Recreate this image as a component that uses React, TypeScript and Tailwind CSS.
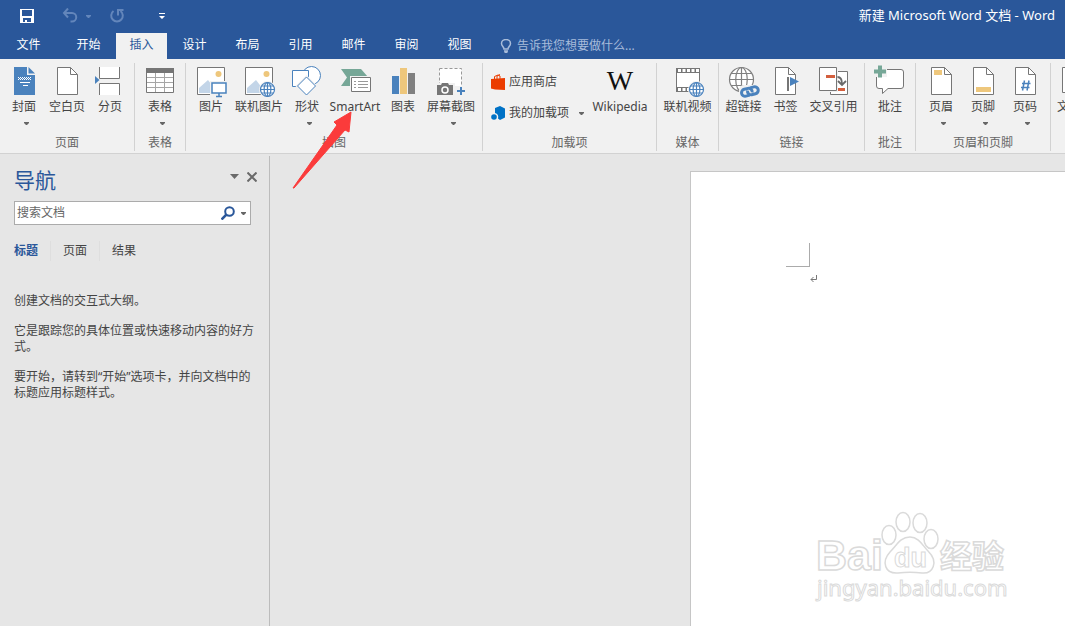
import type { ReactNode } from "react";

const TABS = ["开始", "插入", "设计", "布局", "引用", "邮件", "审阅", "视图"];
const GRAY = "#767676";
const BLUE = "#4a82bd";
const GOLD = "#eec77c";

function Icon({ children }: { children: ReactNode }) {
  return (
    <svg className="h-8 w-8 shrink-0 overflow-visible" viewBox="0 0 32 32" fill="none" aria-hidden="true">
      {children}
    </svg>
  );
}

function Caret({ className = "text-[#666]" }: { className?: string }) {
  return (
    <svg className={`h-[3px] w-[5px] shrink-0 ${className}`} viewBox="0 0 5 3" aria-hidden="true">
      <path d="M0 0h5v1L3 3H2L0 1z" fill="currentColor" />
    </svg>
  );
}

function PageShape({ children }: { children?: ReactNode }) {
  return (
    <Icon>
      <path d="M6.5 1.5h13l7 7v20h-20z" fill="#fff" stroke={GRAY} />
      <path d="M19.5 1.5v7h7" stroke={GRAY} />
      {children}
    </Icon>
  );
}

function Globe({ cx, cy, r, color }: { cx: number; cy: number; r: number; color: string }) {
  return (
    <g stroke={color} strokeWidth="1.2">
      <circle cx={cx} cy={cy} r={r} fill="#fff" />
      <ellipse cx={cx} cy={cy} rx={r * 0.48} ry={r} />
      <path d={`M${cx} ${cy - r}v${r * 2}M${cx - r} ${cy}h${r * 2}`} />
      <path d={`M${cx - r * 0.87} ${cy - r / 2}h${r * 1.74}M${cx - r * 0.87} ${cy + r / 2}h${r * 1.74}`} />
    </g>
  );
}

function Photo({ children }: { children: ReactNode }) {
  return (
    <Icon>
      <path d="M2.5 1.5h27v27h-27z" fill="#fff" stroke={GRAY} />
      <path d="M4 27v-5l9-8 10 13z" fill="#c3d5e8" />
      <circle cx="23.5" cy="8" r="3" fill={GOLD} />
      {children}
    </Icon>
  );
}

const icons = {
  cover: (
    <Icon>
      <path d="M6 1h13v8h8v20H6z" fill={BLUE} />
      <path d="M20.5 1l6.5 6.5h-6.5z" fill={BLUE} />
      <path d="M10 11.5h13M10 13.5h13" stroke="#fff" strokeDasharray="1 1" />
      <path d="M11 12.5h12" stroke="#fff" strokeDasharray="1 1" />
      <path d="M12 16.5h10M15 19.5h5" stroke="#fff" />
    </Icon>
  ),
  blank: <PageShape />,
  pageBreak: (
    <Icon>
      <path d="M5.5 1v11.5h20V1M5.5 29V17.5h20V29" fill="#fff" stroke={GRAY} />
      <path d="M1 10l4.5 4L1 18z" fill={BLUE} />
    </Icon>
  ),
  table: (
    <Icon>
      <path d="M2.5 2.5h27v24h-27z" fill="#fff" stroke={GRAY} />
      <path d="M2 2h28v5H2z" fill={GRAY} />
      <path d="M3 11.5h26M3 16.5h26M3 21.5h26M11.5 7v19M20.5 7v19" stroke="#a6a6a6" />
    </Icon>
  ),
  picture: (
    <Photo>
      <path d="M15 15h18v14H15z" fill="#f1f1f1" />
      <path d="M17 17h14v10H17z" fill="#fff" stroke={BLUE} strokeWidth="1.5" />
      <path d="M24 27v3M21 30.5h6" stroke={BLUE} strokeWidth="1.5" />
    </Photo>
  ),
  onlinePicture: (
    <Photo>
      <circle cx="24.5" cy="23.5" r="8.5" fill="#f1f1f1" />
      <Globe cx={24.5} cy={23.5} r={7} color={BLUE} />
    </Photo>
  ),
  shapes: (
    <Icon>
      <g fill="#fff" stroke={BLUE}>
        <circle cx="20.5" cy="9.5" r="9" />
        <path d="M1.5 4.5h16v16h-16z" />
        <path d="M15.5 11l9 9-9 9-9-9z" stroke="#f1f1f1" strokeWidth="3" />
        <path d="M15.5 11l9 9-9 9-9-9z" />
      </g>
    </Icon>
  ),
  smartArt: (
    <Icon>
      <path d="M2 3h20l7 8-6 9H2l6-8.5z" fill="#76a797" />
      <path d="M11 10h21v17H11z" fill="#f1f1f1" />
      <path d="M12.5 11.5h19v14h-19z" fill="#fff" stroke={GRAY} />
      <path d="M15 15.5h2M15 18.5h2M15 21.5h2M19 15.5h10M19 18.5h10M19 21.5h10" stroke="#999" />
    </Icon>
  ),
  chart: (
    <Icon>
      <path d="M5 10h7v18H5z" fill={BLUE} />
      <path d="M13 2h7v26h-7z" fill={GOLD} />
      <path d="M21 7h7v21h-7z" fill="#808080" />
    </Icon>
  ),
  screenshot: (
    <Icon>
      <path d="M4.5 2.5h22v24h-22z" fill="#fff" stroke="#999" strokeDasharray="3 2" />
      <path d="M1 17h19v13H1zM20 20h12v11H20z" fill="#f1f1f1" />
      <path d="M2 19h4l1-2h6l1 2h4v10H2z" fill={GRAY} />
      <circle cx="10" cy="24" r="3" stroke="#fff" strokeWidth="1.5" />
      <path d="M22 25h8M26 21v8" stroke={BLUE} strokeWidth="2" />
    </Icon>
  ),
  wikipedia: (
    <Icon>
      <text x="16" y="24" textAnchor="middle" fontSize="28" fill="#111" className="font-['Liberation_Serif',serif]">W</text>
    </Icon>
  ),
  video: (
    <Icon>
      <path d="M4.5 2.5h23v22h-23z" fill="#fff" stroke={GRAY} />
      <path d="M4 4.5h24M4 23.5h13" stroke={GRAY} strokeWidth="5" />
      <path d="M6 4.5h21M6 23.5h11" stroke="#fff" strokeWidth="3" strokeDasharray="3 1.500" />
      <circle cx="24.5" cy="23.5" r="8.5" fill="#f1f1f1" />
      <Globe cx={24.5} cy={23.5} r={7} color={BLUE} />
    </Icon>
  ),
  link: (
    <Icon>
      <Globe cx={13.5} cy={13.5} r={12} color="#808080" />
      <rect x="11" y="19" width="22" height="13" rx="5" fill="#f1f1f1" />
      <g stroke={BLUE} strokeWidth="3" transform="rotate(-14 22 26)">
        <path d="M21 29h-4a3.5 3.5 0 010-7h4a3.5 3.5 0 013 5" />
        <path d="M23 22h4a3.5 3.5 0 010 7h-4a3.5 3.5 0 01-3-5" />
      </g>
    </Icon>
  ),
  bookmark: (
    <Icon>
      <path d="M5.5 1.5h13l7 7v20h-20z" fill="#fff" stroke={GRAY} />
      <path d="M18.5 1.5v7h7" stroke={GRAY} />
      <path d="M18 11v14" stroke={GRAY} strokeWidth="2" />
      <path d="M20 11l9 4.5-9 4.5z" fill={BLUE} />
    </Icon>
  ),
  crossRef: (
    <Icon>
      <path d="M12.5 5.5h17v23h-17z" fill="#fff" stroke={GRAY} />
      <path d="M1 1h19v25H1z" fill="#f1f1f1" />
      <path d="M1.5 1.5h17v23h-17z" fill="#fff" stroke={GRAY} />
      <path d="M8 9h9v3H8zM20 22h7v3h-7z" fill="#d35f3e" />
      <path d="M19.5 11c3 0 4.5 2 4.5 7M20 15l4 4 4-4" stroke="#696969" strokeWidth="1.800" />
    </Icon>
  ),
  comment: (
    <Icon>
      <path d="M5 3.5h22a2.5 2.5 0 012.5 2.5v14a2.5 2.5 0 01-2.5 2.5H14l-5.5 5v-5H5A2.5 2.5 0 012.5 20V6A2.5 2.5 0 015 3.5z" fill="#fff" stroke={GRAY} />
      <path d="M0 0h13v11H0z" fill="#f1f1f1" />
      <path d="M0 5.5h12M6 -.5v12" stroke="#76a797" strokeWidth="4" />
    </Icon>
  ),
  header: <PageShape><path d="M9 4h8v5H9z" fill={GOLD} /></PageShape>,
  footer: <PageShape><path d="M9 21h15v5H9z" fill={GOLD} /></PageShape>,
  pageNumber: (
    <PageShape>
      <path d="M15.5 14.5l-2 10M20 14.5l-2 10M13 17.5h8.5M12 21.5h8.5" stroke={BLUE} strokeWidth="1.5" />
    </PageShape>
  ),
  textBox: (
    <Icon>
      <path d="M3.5 1.5h27v25h-27z" fill="#fff" stroke={GRAY} />
    </Icon>
  ),
};

interface ToolProps {
  label: string;
  icon: ReactNode;
  width?: string;
  menu?: boolean;
}

function Tool({ label, icon, width = "w-10", menu }: ToolProps) {
  return (
    <button className={`flex shrink-0 flex-col items-center whitespace-nowrap ${width}`}>
      {icon}
      <span className="mt-px leading-4">{label}</span>
      {menu && <span className="mt-1 ml-1 flex h-2 items-center"><Caret /></span>}
    </button>
  );
}

function Group({ label, width, children }: { label: string; width: string; children: ReactNode }) {
  return (
    <section aria-label={label} className={`flex shrink-0 flex-col border-r border-[#d2d2d2] ${width}`}>
      <div className="flex h-[72px] justify-center pt-[3px]">{children}</div>
      <div className="text-center leading-4 text-[#666]">{label}</div>
    </section>
  );
}

function TitleBar() {
  return (
    <header className="flex h-8 items-center justify-between pr-2.5 pl-5 text-white">
      <div className="flex items-center">
        <button aria-label="保存">
          <svg className="h-3.5 w-3.5" viewBox="0 0 14 14" aria-hidden="true">
            <path fillRule="evenodd" d="M0 0h14v14H0zM2 1v6h10V1zM3 9v4h2v-2h2v2h4V9z" fill="#fff" />
          </svg>
        </button>
        <button aria-label="撤消" className="ml-7 flex items-center text-[#6386bb]">
          <svg className="h-4 w-4" viewBox="0 0 16 16" fill="none" stroke="currentColor" strokeWidth="2" aria-hidden="true">
            <path d="M6 .5L2 5 6 9.500M2 5H10a4 4 0 010 8.500H8.500" />
          </svg>
          <span className="ml-2"><Caret className="text-[#6386bb]" /></span>
        </button>
        <button aria-label="恢复" className="ml-[18px] text-[#6386bb]">
          <svg className="h-4 w-4" viewBox="0 0 16 16" fill="none" stroke="currentColor" strokeWidth="2" aria-hidden="true">
            <path d="M4.500 3a5.800 5.800 0 107 0M9 7.500V2h5.500" />
          </svg>
        </button>
        <button aria-label="自定义快速访问工具栏" className="ml-[34px]">
          <svg className="h-1.5 w-1.5" viewBox="0 0 6 6" fill="#fff" aria-hidden="true">
            <path d="M0 0h6v1H0zM0 3h6L3 6z" />
          </svg>
        </button>
      </div>
      <h1 className="text-[13px] whitespace-nowrap">新建 Microsoft Word 文档 - Word</h1>
    </header>
  );
}

function TabBar() {
  return (
    <nav className="flex h-[27px] items-stretch pt-px text-white">
      <button className="w-[61px] pr-1 pb-0.5">文件</button>
      <div className="flex gap-0.5 pl-0.5">
        {TABS.map((tab) => (
          <button key={tab} className={`w-[51px] pb-0.5 ${tab === "插入" ? "bg-[#f1f1f1] text-[#2a579a]" : ""}`}>
            {tab}
          </button>
        ))}
      </div>
      <button className="ml-[15px] flex items-center gap-[5px] text-[#a8bcda]">
        <svg className="h-3.5 w-3" viewBox="0 0 12 14" fill="none" stroke="currentColor" strokeWidth="1.500" aria-hidden="true">
          <path d="M4 10c0-2-2.500-3-2.500-5.500a4.500 4 0 019 0C10.500 7 8 8 8 10zM4 12h4M4.500 13.500h3" />
        </svg>
        告诉我您想要做什么...
      </button>
    </nav>
  );
}

function Ribbon() {
  return (
    <div className="flex overflow-hidden border-b border-[#d2d2d2] bg-[#f1f1f1] pt-1 pb-0.5 text-[#444]">
      <Group label="页面" width="w-[135px]">
        <div className="flex gap-px">
          <Tool label="封面" icon={icons.cover} menu />
          <Tool label="空白页" icon={icons.blank} width="w-11" />
          <Tool label="分页" icon={icons.pageBreak} />
        </div>
      </Group>
      <Group label="表格" width="w-[51px]">
        <Tool label="表格" icon={icons.table} menu />
      </Group>
      <Group label="插图" width="w-[297px]">
        <div className="flex pl-0.5">
          <Tool label="图片" icon={icons.picture} />
          <Tool label="联机图片" icon={icons.onlinePicture} width="w-14" />
          <Tool label="形状" icon={icons.shapes} menu />
          <Tool label="SmartArt" icon={icons.smartArt} width="w-14" />
          <Tool label="图表" icon={icons.chart} />
          <Tool label="屏幕截图" icon={icons.screenshot} width="w-14" menu />
        </div>
      </Group>
      <Group label="加载项" width="w-[174px]">
        <div className="flex pl-2">
          <div className="flex flex-col gap-[15px] pt-2">
            <button className="flex items-center gap-1 leading-4">
              <svg className="h-4 w-3.5" viewBox="0 0 14 16" fill="none" aria-hidden="true">
                <path d="M3.500 5V2.500L7 1l2 1v3M6 5V2l3-1.500" stroke="#eb3c00" />
                <path d="M0 5l14-1v12l-10-.500-4-1z" fill="#eb3c00" />
              </svg>
              应用商店
            </button>
            <button className="flex items-center gap-1 leading-4">
              <svg className="h-3.5 w-3.5" viewBox="0 0 14 14" fill="#0072c6" aria-hidden="true">
                <path d="M4 2l5-2 5 2.500v9L9 14l-2-1.500A4.500 4.500 0 004 7z" />
                <circle cx="3" cy="11" r="2.800" />
              </svg>
              我的加载项
              <span className="ml-1.5"><Caret /></span>
            </button>
          </div>
          <Tool label="Wikipedia" icon={icons.wikipedia} width="w-[72px]" />
        </div>
      </Group>
      <Group label="媒体" width="w-[62px]">
        <Tool label="联机视频" icon={icons.video} width="w-14" />
      </Group>
      <Group label="链接" width="w-[146px]">
        <Tool label="超链接" icon={icons.link} width="w-11" />
        <Tool label="书签" icon={icons.bookmark} />
        <Tool label="交叉引用" icon={icons.crossRef} width="w-14" />
      </Group>
      <Group label="批注" width="w-[51px]">
        <Tool label="批注" icon={icons.comment} />
      </Group>
      <Group label="页眉和页脚" width="w-[135px]">
        <div className="flex gap-0.5">
          <Tool label="页眉" icon={icons.header} menu />
          <Tool label="页脚" icon={icons.footer} menu />
          <Tool label="页码" icon={icons.pageNumber} menu />
        </div>
      </Group>
      <Group label="文本" width="w-[200px]">
        <div className="flex w-full">
          <Tool label="文本框" icon={icons.textBox} width="w-12" menu />
        </div>
      </Group>
    </div>
  );
}

function NavigationPane() {
  return (
    <aside className="mt-0.5 w-[270px] shrink-0 border-r border-[#bcbcbc] pl-3.5 text-[#444]">
      <div className="flex h-[45px] items-center justify-between pt-0.5 pr-3">
        <h2 className="text-[21px] leading-7 text-[#2a579a]">导航</h2>
        <div className="flex items-center gap-2 pb-1.5 text-[#6a6a6a]">
          <button aria-label="任务窗格选项">
            <svg className="h-[5px] w-[9px]" viewBox="0 0 9 5" aria-hidden="true">
              <path d="M0 0h9L4.500 5z" fill="currentColor" />
            </svg>
          </button>
          <button aria-label="关闭">
            <svg className="h-2.5 w-2.5" viewBox="0 0 10 10" aria-hidden="true">
              <path d="M.500 .500l9 9M9.500 .500l-9 9" stroke="currentColor" strokeWidth="2" />
            </svg>
          </button>
        </div>
      </div>
      <div className="mr-[18px] flex h-6 items-center border border-[#ababab] bg-white pr-1">
        <input type="text" aria-label="搜索文档" placeholder="搜索文档" className="min-w-0 flex-1 pl-0.5 outline-none placeholder:text-[#666]" />
        <button aria-label="搜索" className="mr-1.5">
          <svg className="h-3.5 w-3.5" viewBox="0 0 14 14" fill="none" stroke="#2a579a" strokeWidth="2" aria-hidden="true">
            <circle cx="8.500" cy="5.500" r="4.300" />
            <path d="M5.500 8.500L.500 13.500" strokeWidth="2.500" />
          </svg>
        </button>
        <button aria-label="搜索选项" className="flex"><Caret /></button>
      </div>
      <div className="mt-4 flex leading-5">
        <button className="border-r border-[#dedede] pr-3 font-bold text-[#2a579a]">标题</button>
        <button className="border-r border-[#dedede] px-3">页面</button>
        <button className="px-3">结果</button>
      </div>
      <div className="mt-8 w-[240px] space-y-3.5 leading-4">
        <p>创建文档的交互式大纲。</p>
        <p>它是跟踪您的具体位置或快速移动内容的好方式。</p>
        <p>要开始，请转到“开始”选项卡，并向文档中的标题应用标题样式。</p>
      </div>
    </aside>
  );
}

function Watermark() {
  return (
    <svg className="absolute right-14 bottom-[19px] h-[96px] w-[196px]" viewBox="0 0 196 96" fill="#fff" stroke="#dadada" strokeWidth="1" aria-label="Baidu 经验">
      <text x="3" y="59" fontSize="43" strokeWidth="1.500" className="font-['Liberation_Sans',sans-serif] font-bold">Bai</text>
      <g strokeWidth="1.500">
        <ellipse cx="76" cy="24" rx="7" ry="9.500" />
        <ellipse cx="90" cy="11" rx="7" ry="9.500" />
        <ellipse cx="107" cy="12" rx="7" ry="9.500" />
        <ellipse cx="118" cy="28" rx="7" ry="9.500" />
        <path d="M97 26c9 0 13 9 18 14 11 11 5 23-6 22-8-1-16-1-24 0-13 1-17-11-8-21 7-7 10-15 20-15z" />
      </g>
      <text x="81" y="56" fontSize="27" className="font-['Liberation_Sans',sans-serif] font-bold">du</text>
      <text x="127" y="57" fontSize="32" strokeWidth="1.500" className="font-['Noto_Sans_CJK_SC',sans-serif] font-bold">经验</text>
      <text x="4" y="85" fontSize="22" className="font-['Noto_Sans',sans-serif]">jingyan.baidu.com</text>
    </svg>
  );
}

function DocumentArea() {
  return (
    <main className="flex flex-1 justify-end pt-[17px]">
      <div className="relative w-[375px] border-t border-l border-[#c6c6c6] bg-white pt-[71px] pl-[95px]">
        <div className="h-6 w-6 border-r border-b border-[#ababab]" />
        <svg className="mt-2 ml-6 h-2 w-2" viewBox="0 0 8 8" fill="none" stroke="#777" aria-hidden="true">
          <path d="M6.500 0v4.500H1M3.500 2L1 4.500 3.500 7" />
        </svg>
        <Watermark />
      </div>
    </main>
  );
}

export default function App() {
  return (
    <div className="relative flex min-h-screen flex-col overflow-hidden bg-[#e6e6e6] font-['Noto_Sans','Noto_Sans_CJK_SC',sans-serif] text-xs">
      <div className="bg-[#2a579a]">
        <TitleBar />
        <TabBar />
      </div>
      <Ribbon />
      <div className="flex flex-1">
        <NavigationPane />
        <DocumentArea />
      </div>
      {/* callout pointing at SmartArt */}
      <svg className="pointer-events-none absolute top-[111px] left-[292px] h-20 w-[60px]" viewBox="0 0 60 80" aria-hidden="true">
        <path d="M1 77L45 14l-3-3L59 1l-2 20-4-2L2 77z" fill="#fb3b3b" stroke="#fb3b3b" strokeLinejoin="round" />
      </svg>
    </div>
  );
}
